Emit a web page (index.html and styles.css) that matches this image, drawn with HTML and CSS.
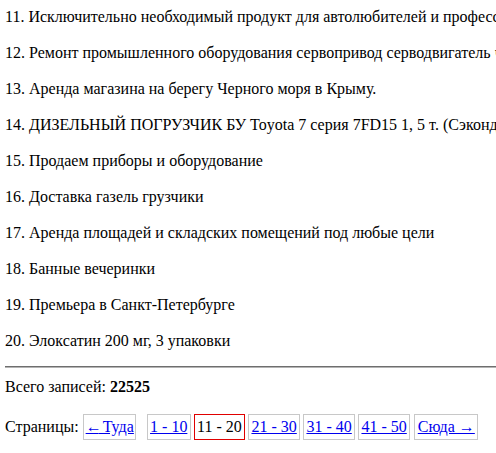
FILE: index.html
```html
<!DOCTYPE html>
<html lang="ru">
<head>
<meta charset="utf-8">
<title>Записи</title>
<link rel="stylesheet" href="styles.css">
</head>
<body>
<div class="page">
  <div class="list">
    <div class="item">11. Исключительно необходимый продукт для автолюбителей и профессионалов</div>
    <div class="item">12. Ремонт промышленного оборудования сервопривод серводвигатель частотный преобразователь</div>
    <div class="item">13. Аренда магазина на берегу Черного моря в Крыму.</div>
    <div class="item">14. ДИЗЕЛЬНЫЙ ПОГРУЗЧИК БУ Toyota 7 серия 7FD15 1, 5 т. (Сэконд хэнд)</div>
    <div class="item">15. Продаем приборы и оборудование</div>
    <div class="item">16. Доставка газель грузчики</div>
    <div class="item">17. Аренда площадей и складских помещений под любые цели</div>
    <div class="item">18. Банные вечеринки</div>
    <div class="item">19. Премьера в Санкт-Петербурге</div>
    <div class="item">20. Элоксатин 200 мг, 3 упаковки</div>
  </div>
  <hr class="rule">
  <div class="total">Всего записей: <b>22525</b></div>
  <div class="pager">
    <span class="label">Страницы:</span>
    <a class="pg prev" href="#"><span class="arr">←</span> Туда</a>
    <a class="pg" href="#">1 - 10</a>
    <span class="pg current">11 - 20</span>
    <a class="pg" href="#">21 - 30</a>
    <a class="pg" href="#">31 - 40</a>
    <a class="pg" href="#">41 - 50</a>
    <a class="pg next" href="#">Сюда →</a>
  </div>
</div>
</body>
</html>
```
FILE: styles.css
```css
html, body {
  margin: 0;
  padding: 0;
  overflow: hidden;
  background: #fff;
}
body {
  font-family: "Liberation Serif", "Times New Roman", serif;
  font-size: 16px;
  color: #000;
}
.page {
  padding: 7px 0 0 5px;
}
.list {
  display: flex;
  flex-direction: column;
  gap: 16px;
}
.item {
  line-height: 20px;
  white-space: nowrap;
}
.rule {
  margin: 15px 0 0 0;
  border: 0;
  border-top: 1px solid #6e6e6e;
  border-bottom: 1px solid #b4b4b4;
  height: 0;
}
.total {
  margin-top: 9px;
  line-height: 20px;
}
.pager {
  margin-top: 17px;
  display: flex;
  align-items: baseline;
  white-space: nowrap;
}
.label {
  margin-right: 4px;
}
.pg {
  display: inline-block;
  border: 1px solid #c8c8c8;
  padding: 3px 2.2px;
  margin-right: 3.3px;
  color: #0000ee;
  text-decoration: underline;
}
.prev {
  margin-right: 11px;
  padding: 3px 1px 3px 2px;
}
.arr {
  letter-spacing: -3px;
}
.current {
  border-color: #e00000;
  color: #000;
  text-decoration: none;
}
.next {
  margin-left: 1px;
  padding: 3px 2.5px;
}
```
